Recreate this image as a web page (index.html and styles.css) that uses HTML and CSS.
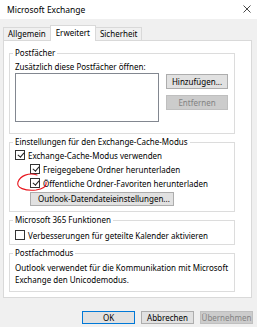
FILE: index.html
```html
<!DOCTYPE html>
<html>
<head>
  <meta charset="utf-8">
  <title>Microsoft Exchange</title>
  <link rel="stylesheet" href="styles.css">
</head>
<body>
  <div class="titlebar">
    <span class="title">Microsoft Exchange</span>
    <svg class="close" width="8" height="8" viewBox="0 0 8 8">
      <path d="M0.5 0.5 L7.5 7.5 M7.5 0.5 L0.5 7.5" stroke="#333" stroke-width="0.9" fill="none"/>
    </svg>
  </div>

  <div class="tabs">
    <div class="tab">Allgemein</div>
    <div class="tab active">Erweitert</div>
    <div class="tab">Sicherheit</div>
  </div>

  <div class="panel">
    <fieldset class="group group-mailboxes">
      <legend>Postfächer</legend>
      <div class="label">Zusätzlich diese Postfächer öffnen:</div>
      <div class="mailbox-row">
        <div class="listbox"></div>
        <div class="side-buttons">
          <button class="btn">Hinzufügen...</button>
          <button class="btn disabled">Entfernen</button>
        </div>
      </div>
    </fieldset>

    <fieldset class="group group-cache">
      <legend>Einstellungen für den Exchange-Cache-Modus</legend>
      <div class="check-row">
        <span class="checkbox checked"></span>Exchange-Cache-Modus verwenden
      </div>
      <div class="check-row sub">
        <span class="checkbox checked"></span>Freigegebene Ordner herunterladen
      </div>
      <div class="check-row sub">
        <span class="checkbox checked"></span>Öffentliche Ordner-Favoriten herunterladen
      </div>
      <div class="sub">
        <button class="btn btn-wide">Outlook-Datendateieinstellungen...</button>
      </div>
    </fieldset>

    <fieldset class="group group-m365">
      <legend>Microsoft 365 Funktionen</legend>
      <div class="check-row">
        <span class="checkbox"></span>Verbesserungen für geteilte Kalender aktivieren
      </div>
    </fieldset>

    <fieldset class="group group-mode">
      <legend>Postfachmodus</legend>
      <p class="mode-text">Outlook verwendet für die Kommunikation mit Microsoft<br>Exchange den Unicodemodus.</p>
    </fieldset>
  </div>

  <div class="dialog-buttons">
    <button class="btn btn-dialog default">OK</button>
    <button class="btn btn-dialog">Abbrechen</button>
    <button class="btn btn-dialog disabled">Übernehmen</button>
  </div>

  <!-- red hand-drawn mark over the third checkbox -->
  <svg class="scribble" width="60" height="30" viewBox="0 0 60 30">
    <path d="M22 4 C14 1 5 5 3 11 C1 17 10 20 21 19 C27 18 32 16 31 11" stroke="#e8141c" stroke-width="1.1" fill="none" stroke-linecap="round"/>
  </svg>
</body>
</html>
```

FILE: styles.css
```css
body {
  margin: 0;
  width: 257px;
  height: 327px;
  overflow: hidden;
  background-color: #f0f0f0;
  font-family: "Noto Sans", "Open Sans", sans-serif;
  font-size: 8px;
  color: #000;
  position: relative;
}

.titlebar {
  height: 19px;
  background-color: #fff;
  display: flex;
  align-items: center;
  justify-content: space-between;
  padding: 0 6px 0 7px;
  font-size: 8.5px;
}

.close {
  margin-top: -2px;
}

.tabs {
  display: flex;
  align-items: flex-end;
  height: 21px;
  padding-left: 3px;
}

.tab {
  height: 13px;
  line-height: 12px;
  padding: 0 4px;
  border: 1px solid #d9d9d9;
  border-bottom: none;
  margin-right: -1px;
  background-color: #f0f0f0;
  box-sizing: border-box;
}

.tab.active {
  height: 16px;
  line-height: 14px;
  background-color: #fff;
  position: relative;
  z-index: 1;
  margin-bottom: -1px;
  padding: 0 5px;
}

.panel {
  margin: 0 5px 0 3px;
  height: 258px;
  box-sizing: border-box;
  background-color: #fff;
  border: 1px solid #d9d9d9;
  padding: 6px 16px 0 5px;
}

.group {
  margin: 0 0 2px 0;
  padding: 0 4px 0 5px;
  border: 1px solid #dcdcdc;
}

.group legend {
  padding: 0 2px;
  margin-left: -2px;
  line-height: 12px;
}

.label {
  line-height: 12px;
  margin-top: 2px;
}

.mailbox-row {
  display: flex;
  gap: 7px;
  padding-bottom: 11px;
}

.listbox {
  width: 144px;
  height: 49px;
  box-sizing: border-box;
  border: 1px solid #828790;
  background-color: #fff;
}

.side-buttons {
  display: flex;
  flex-direction: column;
  gap: 6px;
  padding-top: 1px;
}

.btn {
  font-family: inherit;
  font-size: 8px;
  color: #000;
  background-color: #e1e1e1;
  border: 1px solid #adadad;
  border-radius: 0;
  height: 15px;
  width: 62px;
  padding: 0;
  line-height: 12px;
  box-sizing: border-box;
}

.btn.disabled {
  background-color: #cccccc;
  border-color: #bfbfbf;
  color: #838383;
}

.btn-wide {
  width: 144px;
  height: 14px;
  margin-top: 2px;
  text-align: left;
  padding-left: 7px;
}

.group-cache {
  padding-bottom: 5px;
}

.check-row {
  display: flex;
  align-items: center;
  height: 14px;
}

.check-row.sub,
.sub {
  padding-left: 15px;
}

.checkbox {
  width: 10px;
  height: 10px;
  box-sizing: border-box;
  border: 1px solid #333;
  background-color: #fff;
  margin-right: 3px;
  flex-shrink: 0;
  position: relative;
}

.checkbox.checked::after {
  content: "";
  position: absolute;
  left: 2.5px;
  top: 0px;
  width: 2.5px;
  height: 5px;
  border-right: 1px solid #222;
  border-bottom: 1px solid #222;
  transform: rotate(40deg);
}

.group-m365 {
  padding-top: 2px;
  padding-bottom: 2px;
}

.group-mode {
  padding-top: 3px;
  padding-bottom: 5px;
}

.mode-text {
  margin: 0;
  line-height: 12px;
}

.dialog-buttons {
  display: flex;
  justify-content: flex-end;
  gap: 6px;
  padding: 13px 4px 0 0;
}

.btn-dialog {
  width: 53px;
  height: 13px;
  line-height: 11px;
}

.btn-dialog.default {
  border-color: #0078d7;
}

.scribble {
  position: absolute;
  left: 15px;
  top: 171px;
}
```
